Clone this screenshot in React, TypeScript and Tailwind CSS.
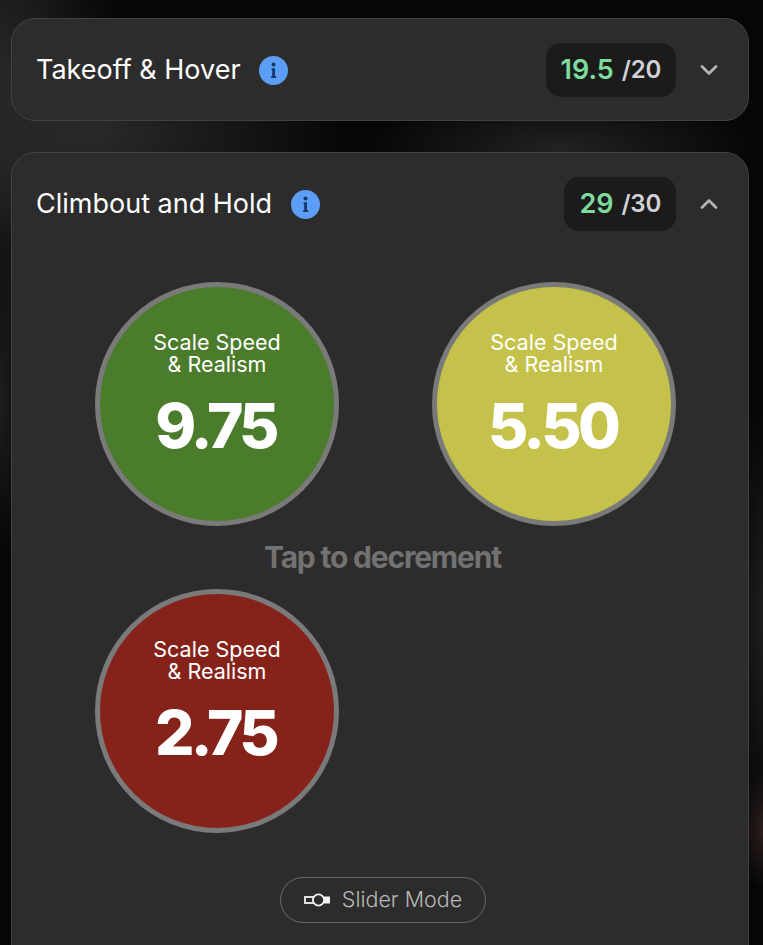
import { ChevronDown, ChevronUp } from "lucide-react"

const InfoIcon = () => (
    <svg width="29" height="29" viewBox="0 0 29 29" className="shrink-0">
        <circle cx="14.5" cy="14.5" r="14.5" fill="#5c9df5" />
        <circle cx="14.5" cy="8.6" r="2" fill="#14366b" />
        <path d="M12.6 12.2h3.4v8h1.2v1.8h-5.2v-1.8h1.2v-6.2h-.6z" fill="#14366b" />
    </svg>
)

const SliderIcon = () => (
    <svg width="27" height="16" viewBox="0 0 27 16" className="shrink-0">
        <rect x="1" y="5" width="9" height="6" fill="none" stroke="#f2f2f2" strokeWidth="1.8" />
        <rect x="19" y="4.5" width="7" height="7" fill="#f2f2f2" />
        <circle cx="14.5" cy="8" r="5.6" fill="#2c2c2c" stroke="#f2f2f2" strokeWidth="1.8" />
    </svg>
)

const ScoreBadge = ({ score, total }: { score: string; total: string }) => (
    <div className="flex h-[54px] items-center rounded-[15px] bg-[#1b1b1b] pl-[15px] pr-[15px] font-semibold">
        <span className="text-[27px] text-[#7ddc9b]">{score}</span>
        <span className="ml-2 text-[24px] tracking-[-0.01em] text-[#d2d2d6]">{total}</span>
    </div>
)

const SectionHeader = ({ title, score, total, open }: { title: string; score: string; total: string; open?: boolean }) => (
    <div className="flex h-[102px] items-center pl-[24px] pr-[25px]">
        <h2 className="mt-[1px] text-[27px] font-normal text-white">{title}</h2>
        <div className="ml-[18.5px]">
            <InfoIcon />
        </div>
        <div className="ml-auto flex items-center gap-[19px]">
            <ScoreBadge score={score} total={total} />
            {open ? (
                <ChevronUp className="h-7 w-7 text-[#b4b4b4]" strokeWidth={2.4} />
            ) : (
                <ChevronDown className="h-7 w-7 text-[#b4b4b4]" strokeWidth={2.4} />
            )}
        </div>
    </div>
)

const ScoreCircle = ({ value, color }: { value: string; color: string }) => (
    <div className={`flex h-[244px] w-[244px] flex-col items-center rounded-full border-[5px] border-[#7a7a7a] pt-[44px] text-white ${color}`}>
        <div className="text-center text-[21.5px] leading-[22px]">
            Scale Speed
            <br />
            &amp; Realism
        </div>
        <div className="mt-[13px] pr-[3px] text-[62px] font-extrabold leading-[76px] tracking-[-0.06em]">{value}</div>
    </div>
)

export default function App() {
    return (
        <div className="h-[945px] overflow-hidden bg-[#060606] bg-[radial-gradient(ellipse_260px_120px_at_90px_135px,#2a2a2a,transparent),radial-gradient(ellipse_120px_300px_at_0px_80px,#262626,transparent),radial-gradient(ellipse_200px_60px_at_560px_150px,#222222,transparent),radial-gradient(ellipse_24px_60px_at_763px_830px,#2c1d1d,transparent),radial-gradient(ellipse_30px_220px_at_763px_620px,#1e1e1e,transparent),radial-gradient(ellipse_30px_160px_at_0px_400px,#1e1e1e,transparent)] pl-[11px] pr-[14px] pt-[18px] font-['Inter',sans-serif]">
            <div className="flex flex-col gap-[31px]">
                <section className="h-[103px] rounded-[24px] border-[1.5px] border-[#424242] bg-[#2c2c2c]">
                    <SectionHeader title="Takeoff & Hover" score="19.5" total="/20" />
                </section>

                <section className="h-[900px] rounded-[24px] border-[1.5px] border-[#424242] bg-[#2c2c2c]">
                    <SectionHeader title="Climbout and Hold" score="29" total="/30" open />

                    <div className="mt-[26.5px] flex flex-col pl-[83px]">
                        <div className="grid w-[581px] grid-cols-[244px_244px] justify-between">
                            <ScoreCircle value="9.75" color="bg-[#4a7c2b]" />
                            <ScoreCircle value="5.50" color="bg-[#c4c24a]" />
                            <div className="col-span-2 flex h-[63px] items-center justify-center pr-[6px] text-[30px] font-bold tracking-[-0.04em] text-[#727272]">
                                Tap to decrement
                            </div>
                            <ScoreCircle value="2.75" color="bg-[#85231b]" />
                        </div>
                    </div>

                    <div className="mt-[44px] flex justify-center pl-[6px]">
                        <button className="flex h-[46px] w-[206px] items-center justify-center gap-[11px] rounded-full border border-[#6a6a6a] text-[21.5px] font-light text-[#b8b8b8]">
                            <SliderIcon />
                            Slider Mode
                        </button>
                    </div>
                </section>
            </div>
        </div>
    )
}
